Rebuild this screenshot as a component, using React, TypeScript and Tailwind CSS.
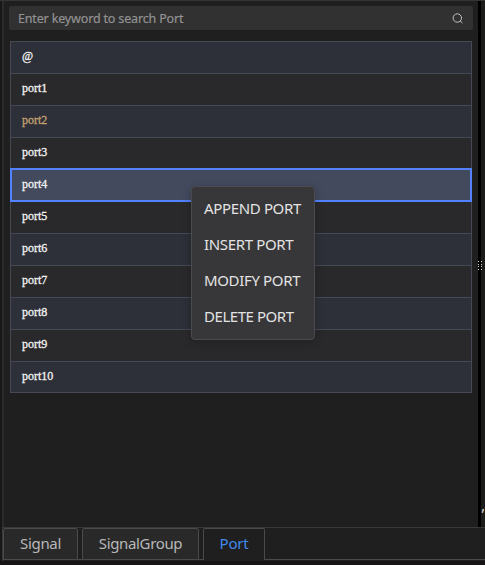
const ports = ['@', 'port1', 'port2', 'port3', 'port4', 'port5', 'port6', 'port7', 'port8', 'port9', 'port10'];

const menuItems = [
  { label: 'APPEND PORT', tracking: 'tracking-[-0.35px]' },
  { label: 'INSERT PORT', tracking: 'tracking-[-0.35px]' },
  { label: 'MODIFY PORT', tracking: 'tracking-[-0.35px]' },
  { label: 'DELETE PORT', tracking: 'tracking-[-0.45px]' },
];

function SearchBox() {
  return (
    <div className="ml-[5px] mt-[5px] flex h-6 w-[464px] items-center justify-between rounded-[2px] bg-[#313131] pl-[9px] pr-[10px]">
      <span className="whitespace-nowrap pt-[2px] text-[12.5px] leading-[22px] tracking-[-0.16px] text-[#929292] [-webkit-text-stroke:0.2px_currentColor]">
        Enter keyword to search Port
      </span>
      <svg width="11" height="11" viewBox="0 0 11 11" fill="none" stroke="#c4c4c4" strokeWidth="1">
        <circle cx="5.3" cy="5" r="4.2" />
        <path d="M8.2 8l2.2 2" />
      </svg>
    </div>
  );
}

function PortTable() {
  return (
    <div className="ml-[6px] mt-[11px] h-[352px] w-[462px] border border-[#464954] font-['Liberation_Serif','Times_New_Roman',serif] text-[12px] text-[#f2f2f2]">
      {ports.map((name, i) => (
        <div
          key={name}
          className={`relative h-8 border-b border-[#464954] pl-[11px] last:h-[30px] last:border-b-0 [-webkit-text-stroke:0.3px_currentColor] ${
            i % 2 ? 'bg-[#29292c]' : 'bg-[#2e3039]'
          } ${name === 'port2' ? 'text-[#c5a170]' : ''} ${name === '@' ? 'leading-[29px]' : 'leading-[28px]'}`}
        >
          {name === 'port4' && (
            <div className="absolute -left-px -top-[2px] h-[34px] w-[462px] border-2 border-[#5282ff] bg-[#434a5e]" />
          )}
          <span className="relative">{name}</span>
        </div>
      ))}
    </div>
  );
}

function ContextMenu() {
  return (
    <div className="absolute left-[191px] top-[186px] h-[154px] w-[124px] rounded-[4px] border border-[#4b4b4d] bg-[#373739] py-1 shadow-[0_2px_8px_rgba(0,0,0,0.25)]">
      {menuItems.map((item) => (
        <div key={item.label} className={`h-9 whitespace-nowrap pl-3 text-[15px] leading-[35px] text-[#e3e3e3] ${item.tracking}`}>
          {item.label}
        </div>
      ))}
    </div>
  );
}

function Grip() {
  return (
    <svg className="absolute left-[477px] top-[261px]" width="6" height="10" viewBox="0 0 6 10" fill="#d0d0d0">
      {[0, 3, 5, 8].map((y) => (
        <g key={y}>
          <rect x="1" y={y} width="1" height="1" />
          <rect x="4" y={y} width="1" height="1" />
        </g>
      ))}
    </svg>
  );
}

export default function App() {
  return (
    <div className="relative flex h-[565px] w-[485px] flex-col overflow-hidden bg-[#1f1f1f] font-['Noto_Sans','Open_Sans',sans-serif]">
      <div className="h-px shrink-0 bg-[#343434]" />
      <div className="flex h-[526px] shrink-0">
        <div className="w-[2px] bg-[#181818]" />
        <div className="w-[2px] bg-[#2c2c2c]" />
        <div className="w-[474px]">
          <SearchBox />
          <PortTable />
        </div>
        <div className="w-[3px] bg-black" />
        <div className="flex w-1 flex-col justify-end overflow-hidden bg-[#1c1c1a] pb-[12px]">
          <span className="text-[16px] leading-5 text-[#cccccc]">,</span>
        </div>
      </div>
      <div className="flex h-[34px] shrink-0">
        <div className="w-[2px] bg-[#181818]" />
        <div className="flex flex-1 border-l border-t border-[#383838]">
          <div className="flex h-8 flex-1 text-[15px] leading-[28px] text-[#b8b8b8]">
            <div className="w-[75px] rounded-t-[2px] border border-[#4a4a4a] bg-[#292929] text-center tracking-[-0.3px]">Signal</div>
            <div className="w-1 border-b border-[#4a4a4a]" />
            <div className="w-[117px] rounded-t-[2px] border border-[#4a4a4a] bg-[#292929] text-center tracking-[-0.36px]">SignalGroup</div>
            <div className="w-1 border-b border-[#4a4a4a]" />
            <div className="w-[62px] rounded-t-[2px] border border-b-0 border-[#4a4a4a] text-center tracking-[-0.2px] text-[#4189ee]">Port</div>
            <div className="flex-1 border-b border-[#4a4a4a]" />
          </div>
        </div>
      </div>
      <div className="flex-1 bg-[#171515]" />
      <Grip />
      <ContextMenu />
    </div>
  );
}
